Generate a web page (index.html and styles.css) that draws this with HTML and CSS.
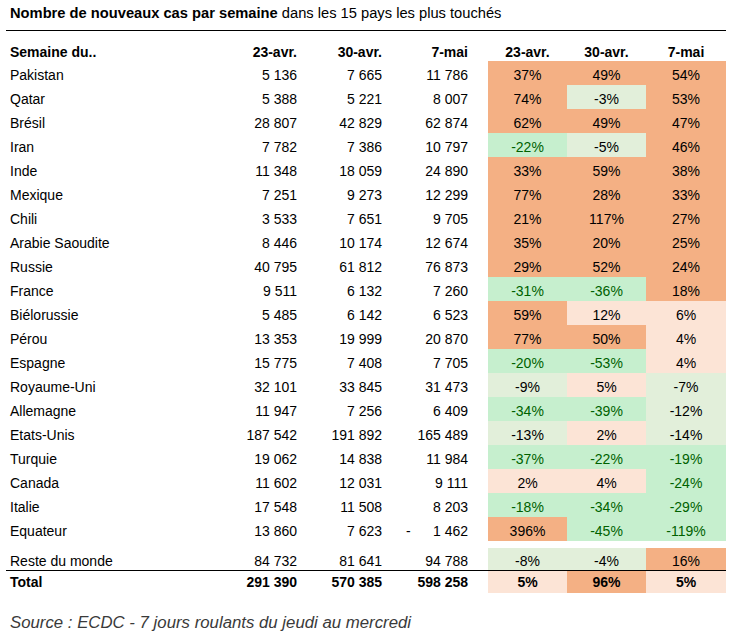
FILE: index.html
```html
<!DOCTYPE html>
<html lang="fr">
<head>
<meta charset="utf-8">
<title>Nouveaux cas par semaine</title>
<link rel="stylesheet" href="styles.css">
</head>
<body>
<div class="page">
  <div class="title"><b>Nombre de nouveaux cas par semaine</b> dans les 15 pays les plus touchés</div>
  <table class="tbl">
    <colgroup>
      <col class="c-label"><col class="c-n1"><col class="c-n2"><col class="c-n3"><col class="c-gap"><col class="c-p1"><col class="c-p2"><col class="c-p3">
    </colgroup>
    <thead>
      <tr class="head">
        <th class="lbl">Semaine du..</th>
        <th class="num">23-avr.</th>
        <th class="num">30-avr.</th>
        <th class="num last">7-mai</th>
        <th></th>
        <th class="pct">23-avr.</th>
        <th class="pct">30-avr.</th>
        <th class="pct">7-mai</th>
      </tr>
    </thead>
    <tbody>
      <tr><td class="lbl">Pakistan</td><td class="num">5 136</td><td class="num">7 665</td><td class="num">11 786</td><td></td><td class="pct o">37%</td><td class="pct o">49%</td><td class="pct o">54%</td></tr>
      <tr><td class="lbl">Qatar</td><td class="num">5 388</td><td class="num">5 221</td><td class="num">8 007</td><td></td><td class="pct o">74%</td><td class="pct l">-3%</td><td class="pct o">53%</td></tr>
      <tr><td class="lbl">Brésil</td><td class="num">28 807</td><td class="num">42 829</td><td class="num">62 874</td><td></td><td class="pct o">62%</td><td class="pct o">49%</td><td class="pct o">47%</td></tr>
      <tr><td class="lbl">Iran</td><td class="num">7 782</td><td class="num">7 386</td><td class="num">10 797</td><td></td><td class="pct g">-22%</td><td class="pct l">-5%</td><td class="pct o">46%</td></tr>
      <tr><td class="lbl">Inde</td><td class="num">11 348</td><td class="num">18 059</td><td class="num">24 890</td><td></td><td class="pct o">33%</td><td class="pct o">59%</td><td class="pct o">38%</td></tr>
      <tr><td class="lbl">Mexique</td><td class="num">7 251</td><td class="num">9 273</td><td class="num">12 299</td><td></td><td class="pct o">77%</td><td class="pct o">28%</td><td class="pct o">33%</td></tr>
      <tr><td class="lbl">Chili</td><td class="num">3 533</td><td class="num">7 651</td><td class="num">9 705</td><td></td><td class="pct o">21%</td><td class="pct o">117%</td><td class="pct o">27%</td></tr>
      <tr><td class="lbl">Arabie Saoudite</td><td class="num">8 446</td><td class="num">10 174</td><td class="num">12 674</td><td></td><td class="pct o">35%</td><td class="pct o">20%</td><td class="pct o">25%</td></tr>
      <tr><td class="lbl">Russie</td><td class="num">40 795</td><td class="num">61 812</td><td class="num">76 873</td><td></td><td class="pct o">29%</td><td class="pct o">52%</td><td class="pct o">24%</td></tr>
      <tr><td class="lbl">France</td><td class="num">9 511</td><td class="num">6 132</td><td class="num">7 260</td><td></td><td class="pct g">-31%</td><td class="pct g">-36%</td><td class="pct o">18%</td></tr>
      <tr><td class="lbl">Biélorussie</td><td class="num">5 485</td><td class="num">6 142</td><td class="num">6 523</td><td></td><td class="pct o">59%</td><td class="pct p">12%</td><td class="pct p">6%</td></tr>
      <tr><td class="lbl">Pérou</td><td class="num">13 353</td><td class="num">19 999</td><td class="num">20 870</td><td></td><td class="pct o">77%</td><td class="pct o">50%</td><td class="pct p">4%</td></tr>
      <tr><td class="lbl">Espagne</td><td class="num">15 775</td><td class="num">7 408</td><td class="num">7 705</td><td></td><td class="pct g">-20%</td><td class="pct g">-53%</td><td class="pct p">4%</td></tr>
      <tr><td class="lbl">Royaume-Uni</td><td class="num">32 101</td><td class="num">33 845</td><td class="num">31 473</td><td></td><td class="pct l">-9%</td><td class="pct p">5%</td><td class="pct l">-7%</td></tr>
      <tr><td class="lbl">Allemagne</td><td class="num">11 947</td><td class="num">7 256</td><td class="num">6 409</td><td></td><td class="pct g">-34%</td><td class="pct g">-39%</td><td class="pct l">-12%</td></tr>
      <tr><td class="lbl">Etats-Unis</td><td class="num">187 542</td><td class="num">191 892</td><td class="num">165 489</td><td></td><td class="pct l">-13%</td><td class="pct p">2%</td><td class="pct l">-14%</td></tr>
      <tr><td class="lbl">Turquie</td><td class="num">19 062</td><td class="num">14 838</td><td class="num">11 984</td><td></td><td class="pct g">-37%</td><td class="pct g">-22%</td><td class="pct g">-19%</td></tr>
      <tr><td class="lbl">Canada</td><td class="num">11 602</td><td class="num">12 031</td><td class="num">9 111</td><td></td><td class="pct p">2%</td><td class="pct p">4%</td><td class="pct g">-24%</td></tr>
      <tr><td class="lbl">Italie</td><td class="num">17 548</td><td class="num">11 508</td><td class="num">8 203</td><td></td><td class="pct g">-18%</td><td class="pct g">-34%</td><td class="pct g">-29%</td></tr>
      <tr><td class="lbl">Equateur</td><td class="num">13 860</td><td class="num">7 623</td><td class="num acc"><span class="neg">-</span><span>1 462</span></td><td></td><td class="pct o">396%</td><td class="pct g">-45%</td><td class="pct g">-119%</td></tr>
      <tr class="spacer"><td colspan="8"></td></tr>
      <tr class="rest"><td class="lbl">Reste du monde</td><td class="num">84 732</td><td class="num">81 641</td><td class="num">94 788</td><td></td><td class="pct l">-8%</td><td class="pct l">-4%</td><td class="pct o">16%</td></tr>
      <tr class="total"><td class="lbl">Total</td><td class="num">291 390</td><td class="num">570 385</td><td class="num">598 258</td><td></td><td class="pct p">5%</td><td class="pct o">96%</td><td class="pct p">5%</td></tr>
    </tbody>
  </table>
  <div class="source">Source : ECDC - 7 jours roulants du jeudi au mercredi</div>
</div>
</body>
</html>
```
FILE: styles.css
```css
html, body {
  margin: 0;
  padding: 0;
  background: #ffffff;
}
body {
  font-family: "Liberation Sans", Arial, sans-serif;
  font-size: 14px;
  color: #000;
}
.page {
  padding: 0 0 0 6px;
  width: 720px;
}
.title {
  padding: 4px 0 0 4px;
  height: 26px;
  box-sizing: border-box;
  line-height: 18px;
  font-size: 14.7px;
}
.tbl {
  border-collapse: collapse;
  border-top: 1px solid #000;
  table-layout: fixed;
  width: 720px;
  margin-top: 4px;
}
.c-label { width: 209px; }
.c-n1 { width: 87px; }
.c-n2 { width: 85px; }
.c-n3 { width: 86px; }
.c-gap { width: 15px; }
.c-p1 { width: 79px; }
.c-p2 { width: 79px; }
.c-p3 { width: 80px; }
.tbl th, .tbl td {
  padding: 0;
  white-space: nowrap;
}
.head th {
  height: 30px;
  vertical-align: bottom;
  padding-bottom: 1px;
  font-weight: bold;
  box-sizing: border-box;
}
.head th.last { padding-right: 10px; }
.tbl td {
  height: 24px;
  line-height: 16px;
  padding-top: 6px;
  box-sizing: border-box;
  vertical-align: top;
}
.lbl { text-align: left; padding-left: 4px !important; }
.num { text-align: right; padding-right: 5px !important; }
.pct { text-align: center; }
.acc {
  display: flex;
  justify-content: space-between;
  padding-left: 19px !important;
}
.o { background: #f4b084; }
.p { background: #fce4d6; }
.l { background: #e2efda; }
.g { background: #c6efce; color: #006100; }
.tbl tr.spacer td {
  height: 7px;
  padding: 0;
}
.tbl tr.rest td {
  height: 23px;
  padding-top: 5px;
  border-bottom: 1px solid #000;
}
.tbl tr.total td {
  height: 22px;
  padding-top: 3px;
  font-weight: bold;
}
.source {
  padding: 20px 0 0 4px;
  font-style: italic;
  font-size: 16.8px;
  color: #3a3a3a;
}
```
